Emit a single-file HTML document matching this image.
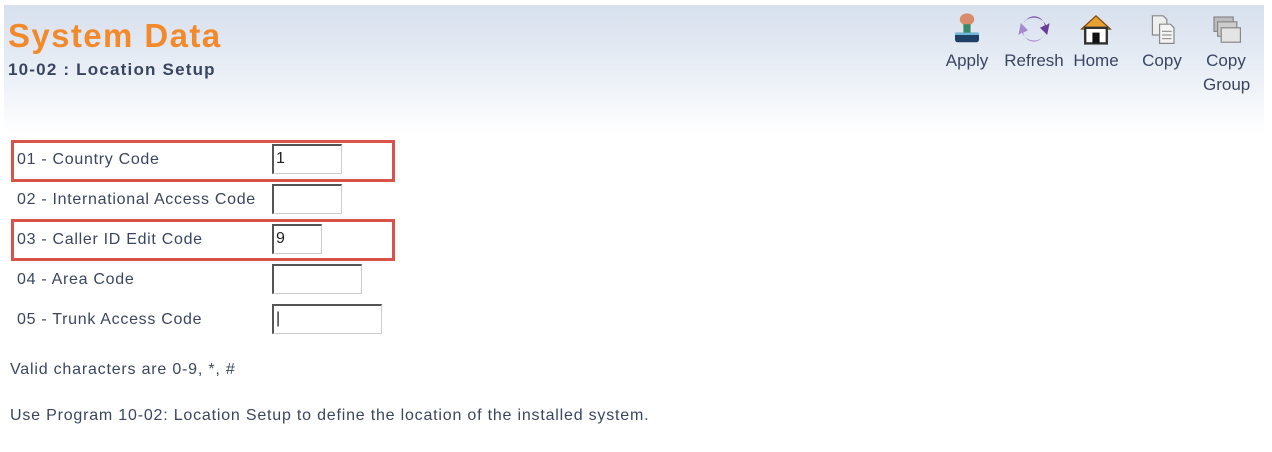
<!DOCTYPE html>
<html><head><style>
body{margin:0;width:1272px;height:452px;background:#fff;font-family:"Liberation Sans","DejaVu Sans",sans-serif;color:#3a4660;position:relative;overflow:hidden}
.hdr{position:absolute;left:4px;top:5px;width:1260px;height:130px;background:linear-gradient(#d7e0ed,#e9eef6 50%,#fff)}
.t{position:absolute;left:8px;top:17px;font-size:33px;font-weight:bold;color:#f28a2c;letter-spacing:1.4px}
.s{position:absolute;left:8px;top:60px;font-size:17px;font-weight:bold;color:#3a4660;letter-spacing:1.2px}
.ic{position:absolute;top:11px;text-align:center;font-size:17px;line-height:24px;color:#3a4660}
.ic svg{display:block;margin:0 auto 2px;width:36px;height:36px}
.lab{position:absolute;left:17px;font-size:16px;letter-spacing:0.7px}
.in{position:absolute;left:272px;height:30px;box-sizing:border-box;border:1px solid #ccc;border-top:2px solid #555;border-left:2px solid #555;background:#fff;font-size:16px;line-height:26px;padding-left:2px;color:#222}
.red{position:absolute;left:11px;width:384px;height:42px;box-sizing:border-box;border:3px solid #d9534a}
.p{position:absolute;left:10px;font-size:16px;letter-spacing:0.8px}
</style></head><body>
<div class="hdr"></div>
<div class="t">System Data</div>
<div class="s">10-02 : Location Setup</div>

<div class="ic" style="left:944px;width:46px"><svg viewBox="0 0 30 30"><ellipse cx="15" cy="7" rx="6" ry="5" fill="#d98b6a"/><rect x="12" y="11" width="6" height="7" fill="#3a8a6a"/><rect x="5" y="18" width="20" height="8" rx="2" fill="#1e3f66"/><rect x="5" y="18" width="20" height="2" fill="#6fb8d8"/></svg>Apply</div>
<div class="ic" style="left:1001px;width:66px"><svg viewBox="0 0 30 30"><path d="M8 8 A9 9 0 0 1 24 12 L20 14 L26 20 L28 10 L25 12 A11 11 0 0 0 6 10Z" fill="#6a3d9a"/><path d="M22 22 A9 9 0 0 1 6 18 L10 16 L4 10 L2 20 L5 18 A11 11 0 0 0 24 20Z" fill="#a889d0"/></svg>Refresh</div>
<div class="ic" style="left:1073px;width:46px"><svg viewBox="0 0 30 30"><path d="M3 15 L15 4 L27 15Z" fill="#e8a030" stroke="#7a4a10"/><rect x="6" y="14" width="18" height="13" fill="#fff" stroke="#333" stroke-width="2"/><rect x="12" y="18" width="6" height="9" fill="#111"/></svg>Home</div>
<div class="ic" style="left:1139px;width:46px"><svg viewBox="0 0 30 30"><path d="M7 4h9l3 3v13H7Z" fill="#eee" stroke="#888"/><path d="M13 11h9l3 3v13H13Z" fill="#f4f4f4" stroke="#888"/><path d="M15 17h8M15 20h8M15 23h8" stroke="#999"/></svg>Copy</div>
<div class="ic" style="left:1203px;width:46px"><svg viewBox="0 0 30 30"><rect x="5" y="5" width="16" height="12" fill="#bbb" stroke="#888"/><rect x="8" y="9" width="16" height="12" fill="#ccc" stroke="#888"/><rect x="11" y="14" width="16" height="12" fill="#e4e4e4" stroke="#888"/></svg>Copy<br>Group</div>

<div class="red" style="top:140px"></div>
<div class="red" style="top:219px"></div>
<div class="lab" style="top:151px">01 - Country Code</div>
<div class="lab" style="top:191px">02 - International Access Code</div>
<div class="lab" style="top:231px">03 - Caller ID Edit Code</div>
<div class="lab" style="top:271px">04 - Area Code</div>
<div class="lab" style="top:311px">05 - Trunk Access Code</div>
<div class="in" style="top:144px;width:70px">1</div>
<div class="in" style="top:184px;width:70px"></div>
<div class="in" style="top:224px;width:50px">9</div>
<div class="in" style="top:264px;width:90px"></div>
<div class="in" style="top:304px;width:110px">|</div>
<div class="p" style="top:361px">Valid characters are 0-9, *, #</div>
<div class="p" style="top:407px">Use Program 10-02: Location Setup to define the location of the installed system.</div>
</body></html>
